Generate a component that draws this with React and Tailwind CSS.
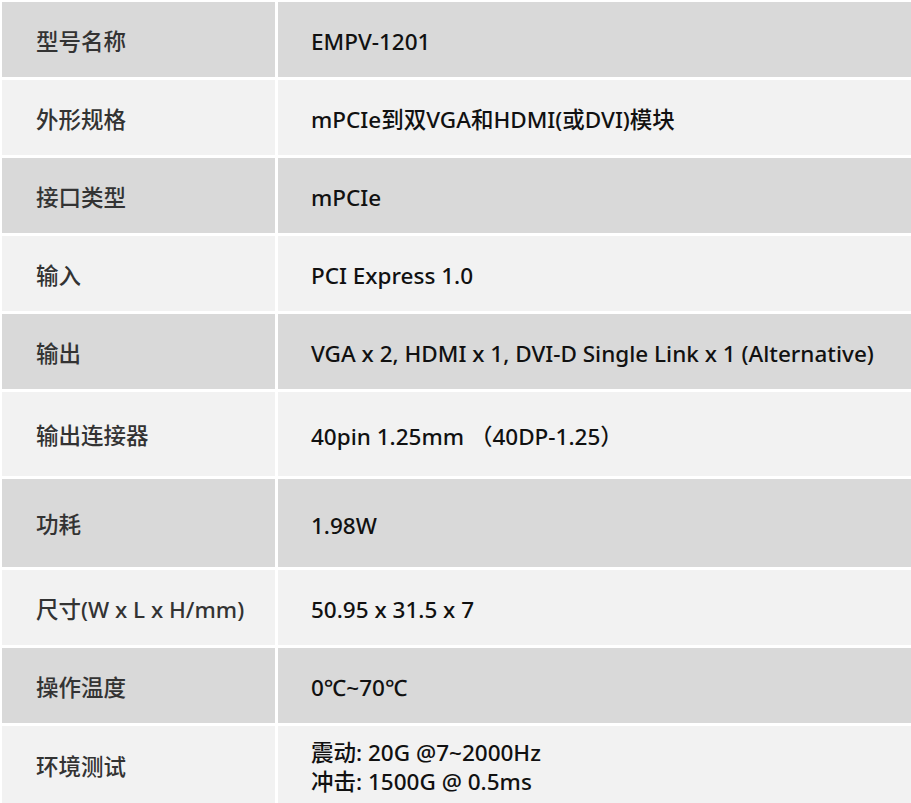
import React from "react";

const rows = [
  { k: "型号名称", v: ["EMPV-1201"], h: "h-[75px]", bg: "bg-[#d9d9d9]" },
  { k: "外形规格", v: ["mPCIe到双VGA和HDMI(或DVI)模块"], h: "h-[75px]", bg: "bg-[#f2f2f2]" },
  { k: "接口类型", v: ["mPCIe"], h: "h-[75px]", bg: "bg-[#d9d9d9]" },
  { k: "输入", v: ["PCI Express 1.0"], h: "h-[75px]", bg: "bg-[#f2f2f2]" },
  { k: "输出", v: ["VGA x 2, HDMI x 1, DVI-D Single Link x 1 (Alternative)"], h: "h-[75px]", bg: "bg-[#d9d9d9]" },
  { k: "输出连接器", v: ["40pin 1.25mm （40DP-1.25）"], h: "h-[84px]", bg: "bg-[#f2f2f2]" },
  { k: "功耗", v: ["1.98W"], h: "h-[88px]", bg: "bg-[#d9d9d9]" },
  { k: "尺寸(W x L x H/mm)", v: ["50.95 x 31.5 x 7"], h: "h-[75px]", bg: "bg-[#f2f2f2]" },
  { k: "操作温度", v: ["0℃~70℃"], h: "h-[75px]", bg: "bg-[#d9d9d9]" },
  { k: "环境测试", v: ["震动: 20G @7~2000Hz", "冲击: 1500G @ 0.5ms"], h: "h-[77px]", bg: "bg-[#f2f2f2]" },
];

export default function App() {
  return (
    <div
      className="w-[911px] h-[803px] overflow-hidden bg-white pt-[2px] pl-[2px]"
      style={{ fontFamily: '"Noto Sans", "Noto Sans CJK SC", sans-serif' }}
    >
      <div className="grid grid-cols-[273px_1fr] gap-[3px] text-[22.5px] font-medium">
        {rows.map((r, i) => (
          <React.Fragment key={i}>
            <div className={`${r.h} ${r.bg} flex items-center pl-[34px] pt-[4px] text-[#333333]`}>
              {r.k}
            </div>
            <div className={`${r.h} ${r.bg} flex flex-col justify-center pl-[33px] pt-[4px] text-[#111111] leading-[29px]`}>
              {r.v.map((t, j) => (
                <div key={j} className="whitespace-pre">{t}</div>
              ))}
            </div>
          </React.Fragment>
        ))}
      </div>
    </div>
  );
}
